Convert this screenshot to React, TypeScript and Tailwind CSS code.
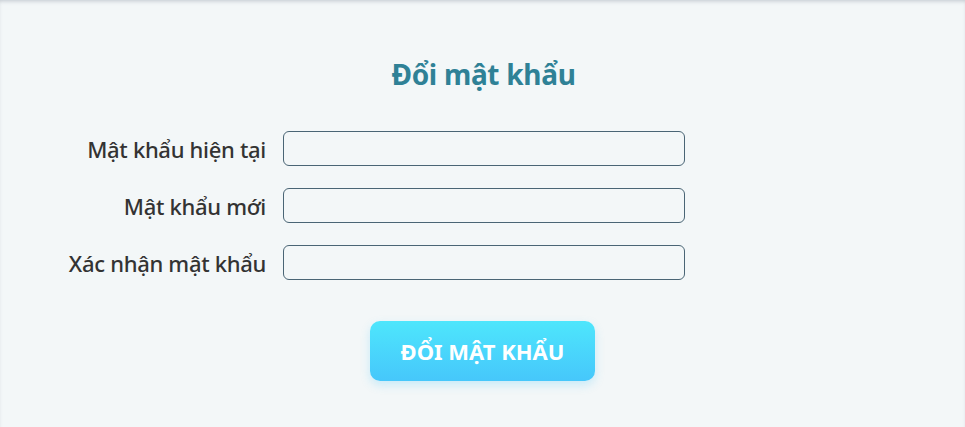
export default function App() {
  const fields = ['Mật khẩu hiện tại', 'Mật khẩu mới', 'Xác nhận mật khẩu'];

  return (
    <div
      className="min-h-[427px] w-full bg-[#f3f7f8] shadow-[inset_0_3px_4px_-2px_rgba(40,50,80,0.25)] text-[#333333]"
      style={{ fontFamily: '"Noto Sans", "Open Sans", sans-serif' }}
    >
      <div className="pt-[55px] flex flex-col">
        <h1 className="text-center text-[28px] leading-[38px] font-bold text-[#2f8196] pl-[2px] tracking-[-0.3px]">
          Đổi mật khẩu
        </h1>

        <div className="mt-[38px] grid grid-cols-[266px_402px] gap-x-[17px] gap-y-[22px] items-center">
          {fields.map((label) => (
            <div key={label} className="contents">
              <label className="text-right text-[22px] leading-[28px] font-medium text-[#333333] tracking-[-0.3px]">{label}</label>
              <input
                type="password"
                className="h-[35px] w-full rounded-[6px] border border-[#4a6575] bg-[#f3f7f8] px-3 outline-none"
              />
            </div>
          ))}
        </div>

        <div className="mt-[41px] flex justify-center">
          <button className="h-[60px] w-[225px] rounded-[10px] bg-gradient-to-b from-[#4ee6fc] to-[#46c7fb] text-[22px] font-bold text-white shadow-[0_4px_10px_rgba(70,200,250,0.25)]">
            ĐỔI MẬT KHẨU
          </button>
        </div>
      </div>
    </div>
  );
}
